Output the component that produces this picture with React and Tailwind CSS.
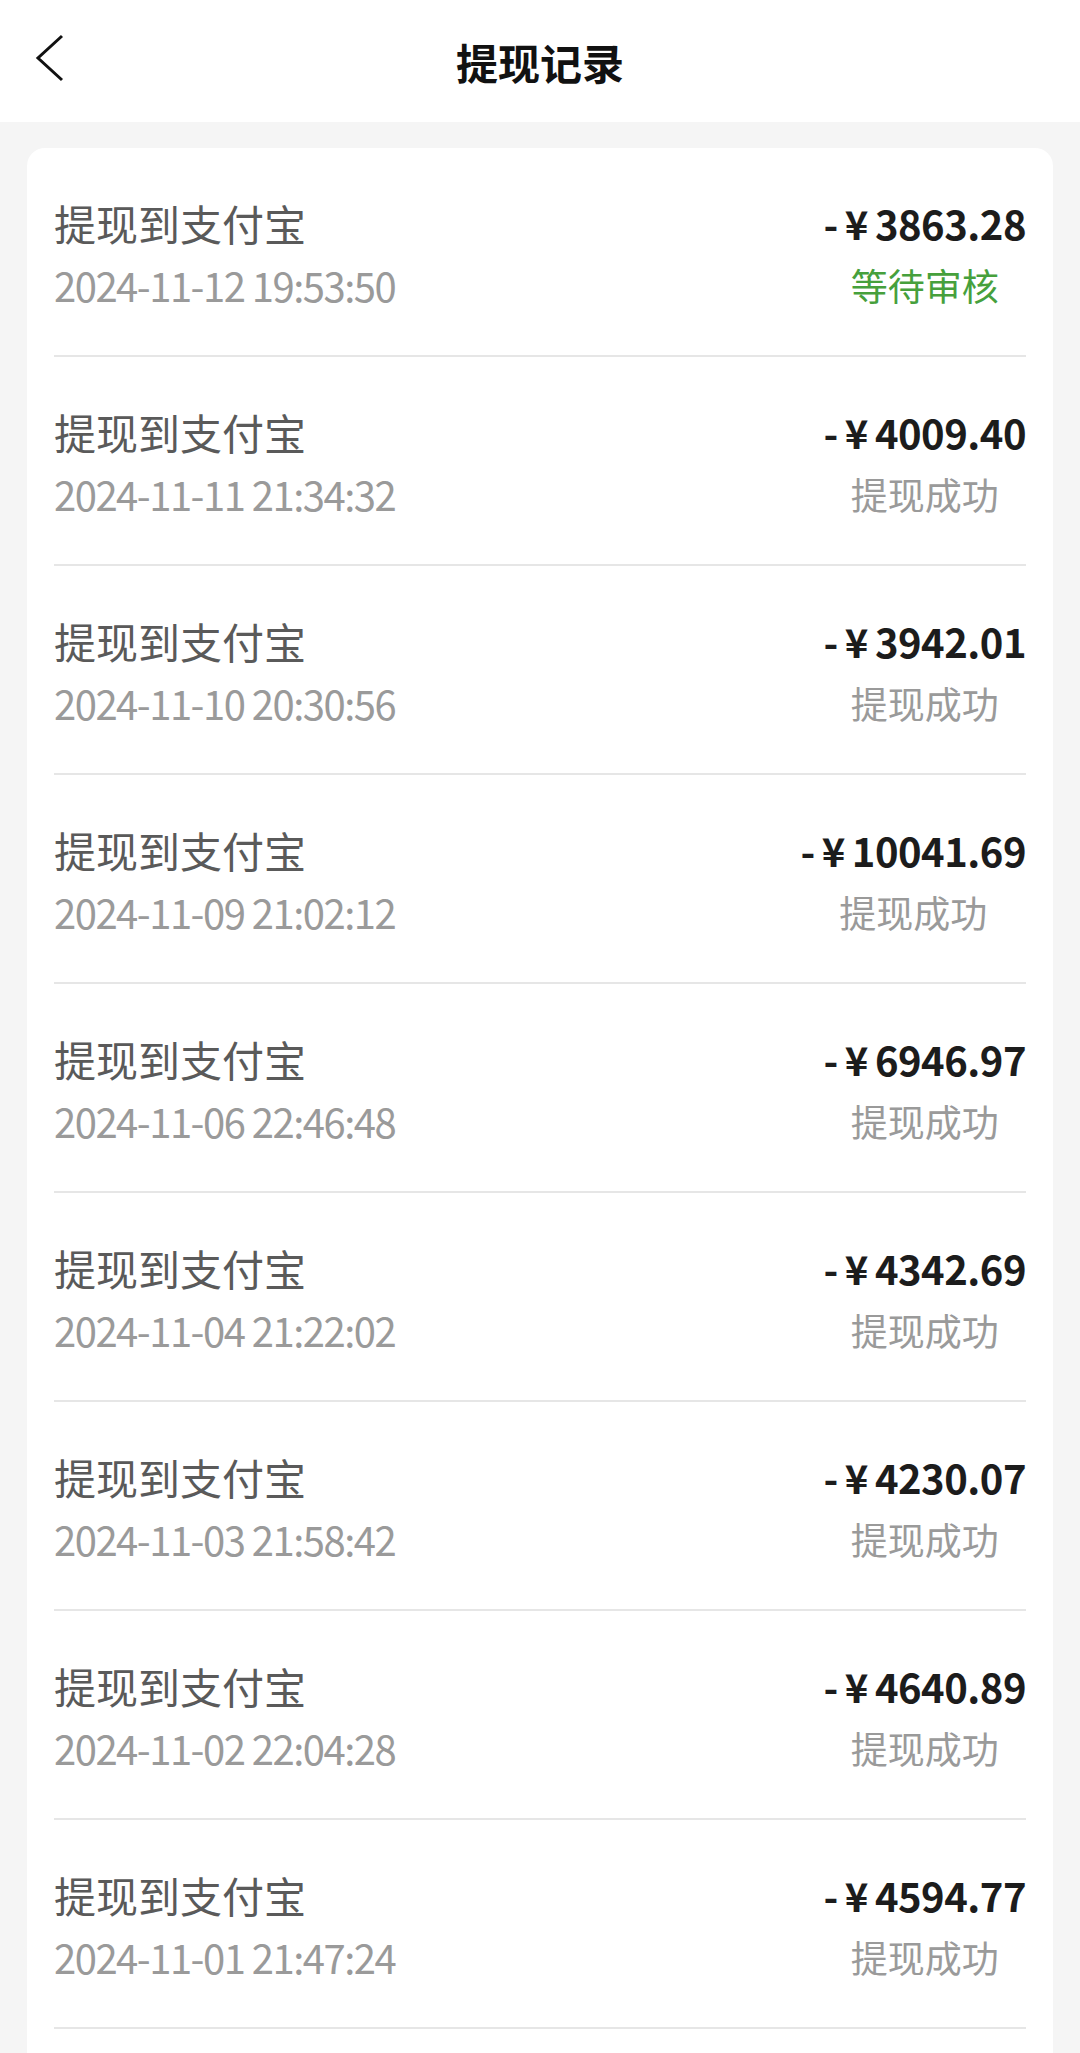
const records = [
  { amount: '3863.28', time: '2024-11-12 19:53:50', status: '等待审核', pending: true },
  { amount: '4009.40', time: '2024-11-11 21:34:32', status: '提现成功' },
  { amount: '3942.01', time: '2024-11-10 20:30:56', status: '提现成功' },
  { amount: '10041.69', time: '2024-11-09 21:02:12', status: '提现成功' },
  { amount: '6946.97', time: '2024-11-06 22:46:48', status: '提现成功' },
  { amount: '4342.69', time: '2024-11-04 21:22:02', status: '提现成功' },
  { amount: '4230.07', time: '2024-11-03 21:58:42', status: '提现成功' },
  { amount: '4640.89', time: '2024-11-02 22:04:28', status: '提现成功' },
  { amount: '4594.77', time: '2024-11-01 21:47:24', status: '提现成功' },
];

function RecordRow({ record }) {
  return (
    <div className="flex items-start justify-between border-b-2 border-[#e6e6e6] pt-[50px] pb-[45px]">
      <div className="flex flex-col">
        <span className="text-[42px] leading-[50px] text-[#5a5a5a]">提现到支付宝</span>
        <span className="mt-[12px] text-[40px] leading-[50px] tracking-[-1.5px] text-[#9a9a9a]">{record.time}</span>
      </div>
      <div className="flex flex-col items-center">
        <span className="text-[40px] leading-[50px] font-bold tracking-[-0.5px] text-[#1c1c1c]">
          -<span className="mx-[7px]">¥</span>{record.amount}
        </span>
        <span
          className={
            'mt-[12px] text-[37px] leading-[50px] ' +
            (record.pending ? 'text-[#46a03c]' : 'text-[#9a9a9a]')
          }
        >
          {record.status}
        </span>
      </div>
    </div>
  );
}

export default function App() {
  return (
    <div className="h-[2053px] overflow-hidden bg-[#f5f5f5] font-['Noto_Sans_CJK_SC',sans-serif]">
      <header className="relative flex h-[122px] items-center justify-center bg-white">
        <button className="absolute left-[34px] top-[32px] p-0">
          <svg width="32" height="52" viewBox="0 0 32 52" fill="none">
            <polyline points="28,4 4,26 28,48" stroke="#111" strokeWidth="3" strokeLinejoin="miter" />
          </svg>
        </button>
        <h1 className="text-[42px] font-bold text-[#111]">提现记录</h1>
      </header>

      <div className="px-[27px] pt-[26px]">
        <div className="rounded-[18px] bg-white px-[27px] pb-[60px]">
          {records.map((record) => (
            <RecordRow key={record.time} record={record} />
          ))}
        </div>
      </div>
    </div>
  );
}
